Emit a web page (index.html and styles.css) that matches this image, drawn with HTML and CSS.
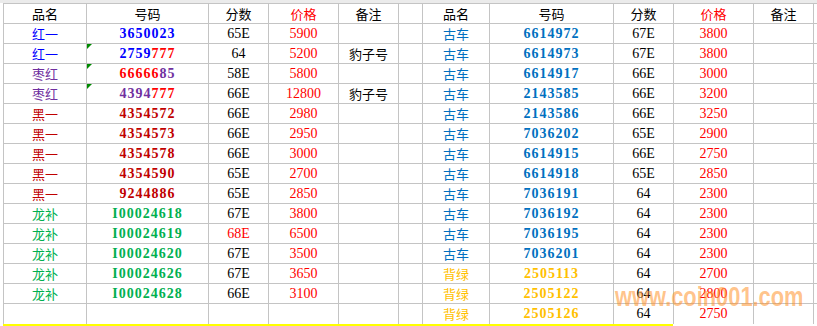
FILE: index.html
```html
<!DOCTYPE html>
<html>
<head>
<meta charset="utf-8">
<link rel="stylesheet" href="styles.css">
</head>
<body>
<div class="sheet">
  <div class="topband"></div>
  <table class="grid">
    <colgroup>
      <col class="w83"><col class="w122"><col class="w60"><col class="w70"><col class="w60"><col class="w24">
      <col class="w67"><col class="w124"><col class="w60"><col class="w80"><col class="w60"><col class="w40">
    </colgroup>
    <tr>
      <td class="cn">品名</td><td class="cn">号码</td><td class="cn">分数</td><td class="cn red">价格</td><td class="cn">备注</td><td></td>
      <td class="cn">品名</td><td class="cn">号码</td><td class="cn">分数</td><td class="cn red">价格</td><td class="cn">备注</td><td></td>
    </tr>
    <tr>
      <td class="cn blue">红一</td><td class="code blue">3650023</td><td>65E</td><td class="red">5900</td><td></td><td></td>
      <td class="cn sky">古车</td><td class="code sky">6614972</td><td>67E</td><td class="red">3800</td><td></td><td></td>
    </tr>
    <tr>
      <td class="cn blue">红一</td><td class="code blue flag">2759<span class="red">777</span></td><td>64</td><td class="red">5200</td><td class="cn">豹子号</td><td></td>
      <td class="cn sky">古车</td><td class="code sky">6614973</td><td>67E</td><td class="red">3800</td><td></td><td></td>
    </tr>
    <tr>
      <td class="cn purple">枣红</td><td class="code purple flag"><span class="red">66666</span>85</td><td>58E</td><td class="red">5800</td><td></td><td></td>
      <td class="cn sky">古车</td><td class="code sky">6614917</td><td>66E</td><td class="red">3000</td><td></td><td></td>
    </tr>
    <tr>
      <td class="cn purple">枣红</td><td class="code purple flag">4394<span class="red">777</span></td><td>66E</td><td class="red">12800</td><td class="cn">豹子号</td><td></td>
      <td class="cn sky">古车</td><td class="code sky">2143585</td><td>66E</td><td class="red">3200</td><td></td><td></td>
    </tr>
    <tr>
      <td class="cn dark">黑一</td><td class="code dark">4354572</td><td>66E</td><td class="red">2980</td><td></td><td></td>
      <td class="cn sky">古车</td><td class="code sky">2143586</td><td>66E</td><td class="red">3250</td><td></td><td></td>
    </tr>
    <tr>
      <td class="cn dark">黑一</td><td class="code dark">4354573</td><td>66E</td><td class="red">2950</td><td></td><td></td>
      <td class="cn sky">古车</td><td class="code sky">7036202</td><td>65E</td><td class="red">2900</td><td></td><td></td>
    </tr>
    <tr>
      <td class="cn dark">黑一</td><td class="code dark">4354578</td><td>66E</td><td class="red">3000</td><td></td><td></td>
      <td class="cn sky">古车</td><td class="code sky">6614915</td><td>66E</td><td class="red">2750</td><td></td><td></td>
    </tr>
    <tr>
      <td class="cn dark">黑一</td><td class="code dark">4354590</td><td>65E</td><td class="red">2700</td><td></td><td></td>
      <td class="cn sky">古车</td><td class="code sky">6614918</td><td>65E</td><td class="red">2850</td><td></td><td></td>
    </tr>
    <tr>
      <td class="cn dark">黑一</td><td class="code dark">9244886</td><td>65E</td><td class="red">2850</td><td></td><td></td>
      <td class="cn sky">古车</td><td class="code sky">7036191</td><td>64</td><td class="red">2300</td><td></td><td></td>
    </tr>
    <tr>
      <td class="cn green">龙补</td><td class="code green">I00024618</td><td>67E</td><td class="red">3800</td><td></td><td></td>
      <td class="cn sky">古车</td><td class="code sky">7036192</td><td>64</td><td class="red">2300</td><td></td><td></td>
    </tr>
    <tr>
      <td class="cn green">龙补</td><td class="code green">I00024619</td><td class="red">68E</td><td class="red">6500</td><td></td><td></td>
      <td class="cn sky">古车</td><td class="code sky">7036195</td><td>64</td><td class="red">2300</td><td></td><td></td>
    </tr>
    <tr>
      <td class="cn green">龙补</td><td class="code green">I00024620</td><td>67E</td><td class="red">3500</td><td></td><td></td>
      <td class="cn sky">古车</td><td class="code sky">7036201</td><td>64</td><td class="red">2300</td><td></td><td></td>
    </tr>
    <tr>
      <td class="cn green">龙补</td><td class="code green">I00024626</td><td>67E</td><td class="red">3650</td><td></td><td></td>
      <td class="cn gold">背绿</td><td class="code gold">2505113</td><td>64</td><td class="red">2700</td><td></td><td></td>
    </tr>
    <tr>
      <td class="cn green">龙补</td><td class="code green">I00024628</td><td>66E</td><td class="red">3100</td><td></td><td></td>
      <td class="cn gold">背绿</td><td class="code gold">2505122</td><td>64</td><td class="red">2800</td><td></td><td></td>
    </tr>
    <tr class="last">
      <td></td><td></td><td></td><td></td><td></td><td></td>
      <td class="cn gold">背绿</td><td class="code gold">2505126</td><td>64</td><td class="red">2750</td><td></td><td></td>
    </tr>
  </table>
  <div class="yellowbar"></div>
  <div class="watermark">www.coin001.com</div>
</div>
</body>
</html>
```
FILE: styles.css
```css
html, body {
  margin: 0;
  padding: 0;
  background: #ffffff;
}
body {
  width: 817px;
  height: 326px;
  overflow: hidden;
}
.sheet {
  position: relative;
  width: 817px;
  height: 326px;
  overflow: hidden;
}
.topband {
  height: 3px;
  background: #ebebeb;
}
.grid {
  border-collapse: collapse;
  table-layout: fixed;
  margin-left: 3px;
  width: 850px;
}
.w83 { width: 83px; }
.w122 { width: 122px; }
.w60 { width: 60px; }
.w70 { width: 70px; }
.w24 { width: 24px; }
.w67 { width: 67px; }
.w124 { width: 124px; }
.w80 { width: 80px; }
.w40 { width: 40px; }
.grid tr {
  height: 20px;
}
.grid td {
  border: 1px solid #c4c4c4;
  padding: 0;
  height: 19px;
  text-align: center;
  vertical-align: middle;
  font-family: "Liberation Serif", "Noto Sans CJK SC", serif;
  font-size: 14px;
  line-height: 18px;
  color: #000000;
  white-space: nowrap;
  overflow: hidden;
}
.grid tr.last td {
  border-bottom: none;
}
.grid td.cn {
  font-family: "Noto Sans CJK SC", sans-serif;
  font-size: 13px;
}
.grid td.code {
  font-weight: bold;
  letter-spacing: 1px;
}
.grid td.flag {
  position: relative;
}
.grid td.flag::before {
  content: "";
  position: absolute;
  left: 0;
  top: 0;
  width: 0;
  height: 0;
  border-top: 5px solid #008a00;
  border-right: 5px solid transparent;
}
.red { color: #ff0000 !important; }
.grid td.blue { color: #0000ff; }
.grid td.purple { color: #7030a0; }
.grid td.dark { color: #c00000; }
.grid td.green { color: #00b050; }
.grid td.sky { color: #0070c0; }
.grid td.gold { color: #ffc000; }
.yellowbar {
  margin-left: 3px;
  width: 670px;
  height: 3px;
  background: #ffff00;
}
.watermark {
  position: absolute;
  left: 615px;
  top: 283px;
  font-family: "Liberation Sans", sans-serif;
  font-weight: bold;
  font-size: 28px;
  line-height: 28px;
  color: rgba(255, 145, 40, 0.55);
  transform: scaleX(0.78);
  transform-origin: left top;
  white-space: nowrap;
}
```
